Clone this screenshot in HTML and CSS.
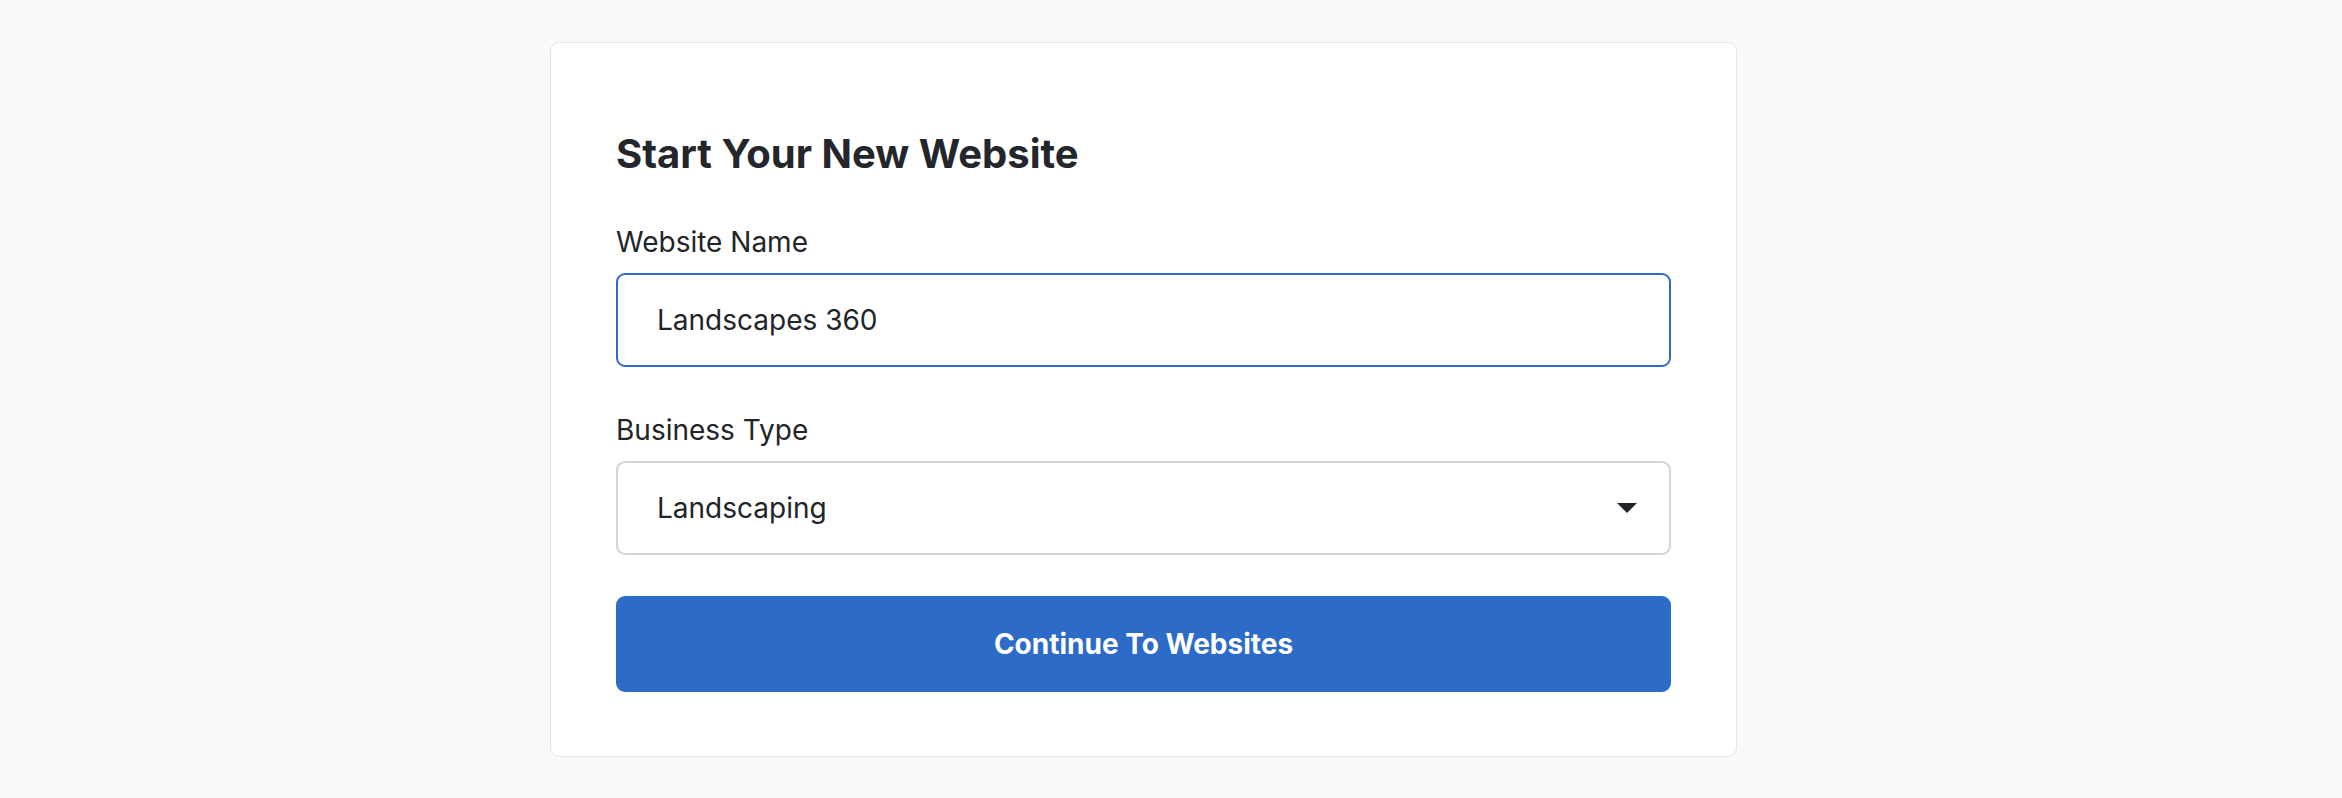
FILE: index.html
```html
<!DOCTYPE html>
<html lang="en">
<head>
<meta charset="utf-8">
<title>Start Your New Website</title>
<link rel="stylesheet" href="styles.css">
</head>
<body>
<main class="page">
  <form class="card">
    <h1 class="title">Start Your New Website</h1>
    <div class="field">
      <label class="label" for="site-name">Website Name</label>
      <input class="control control-focus" id="site-name" type="text" value="Landscapes 360">
    </div>
    <div class="field">
      <label class="label">Business Type</label>
      <div class="control select" role="combobox">
        <span class="select-value">Landscaping</span>
        <svg class="caret" width="20" height="10" viewBox="0 0 20 10"><path d="M0 0 H20 L10 10 Z" fill="#212529"/></svg>
      </div>
    </div>
    <button class="btn" type="button">Continue To Websites</button>
  </form>
</main>
</body>
</html>
```
FILE: styles.css
```css
* { box-sizing: border-box; }
html, body { margin: 0; padding: 0; }
body {
  background: #f8f9fb;
  font-family: Inter, "Noto Sans", sans-serif;
  color: #212529;
}
.page {
  padding: 42px 0 42px 550px;
}
.card {
  width: 1187px;
  background: #ffffff;
  border: 1px solid #e3e4e6;
  border-radius: 9px;
  padding: 87px 65px 64px;
  display: flex;
  flex-direction: column;
}
.title {
  margin: 0;
  font-size: 40px;
  line-height: 48px;
  font-weight: 700;
  color: #23262b;
}
.field {
  display: flex;
  flex-direction: column;
  gap: 13px;
  margin-top: 46px;
}
.field + .field { margin-top: 45px; }
.label {
  font-size: 28px;
  line-height: 36px;
  color: #212529;
}
.control {
  height: 94px;
  width: 100%;
  border: 2px solid #d4d4d4;
  border-radius: 9px;
  padding: 0 32px 0 39px;
  font-family: inherit;
  font-size: 28px;
  color: #212529;
  background: #fff;
  outline: none;
}
.control-focus { border-color: #2d6bc8; }
.select {
  display: flex;
  align-items: center;
  justify-content: space-between;
}
.select-value { line-height: 34px; }
.caret { display: block; }
.btn {
  margin-top: 41px;
  height: 96px;
  border: none;
  border-radius: 9px;
  background: #2d6bc8;
  color: #ffffff;
  font-family: inherit;
  font-size: 28px;
  font-weight: 700;
  cursor: pointer;
}
```
